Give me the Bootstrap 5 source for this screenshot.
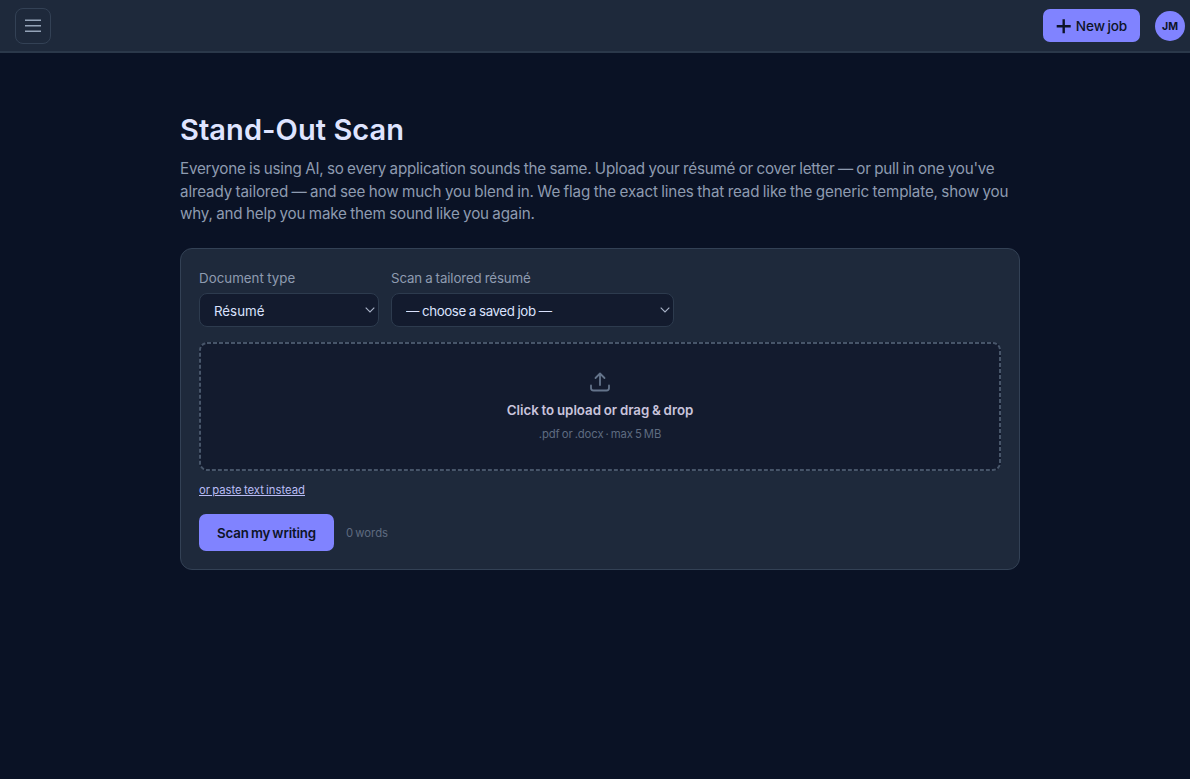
<!DOCTYPE html>
<html lang="en">
<head>
<meta charset="utf-8">
<meta name="viewport" content="width=device-width, initial-scale=1">
<title>Stand-Out Scan</title>
<link href="https://cdn.jsdelivr.net/npm/bootstrap@5.3.0/dist/css/bootstrap.min.css" rel="stylesheet">
<style>
  body { background: #0a1225; color: #dae2fd; font-family: Inter, "Open Sans", sans-serif; overflow: hidden; }
  .topbar { height: 53px; background: #1e293b; border-bottom: 2px solid #2b384a; padding: 0 5px 0 15px; }
  .menu-btn { width: 36px; height: 36px; border: 1px solid #334155; border-radius: 8px; color: #94a3b8; }
  .btn-violet { --bs-btn-bg: #8083ff; --bs-btn-color: #0d1328; --bs-btn-hover-bg: #9093ff; --bs-btn-hover-color: #0d1328; border: 0; border-radius: 7px; white-space: nowrap; }
  .new-job { width: 97px; height: 33px; font-size: 13.6px; font-weight: 500; letter-spacing: -.1px; word-spacing: -1px; }
  .new-job span { position: relative; top: 1px; }
  .avatar { width: 30px; height: 30px; margin-left: 15px; background: #8083ff; color: #0d1328; font-size: 10.5px; font-weight: 700; padding-top: 2px; }
  .page { width: 840px; margin: 59px 0 0 180px; }
  h1 { font-size: 29px; font-weight: 600; line-height: 36px; letter-spacing: .06px; color: #dfe4ff; }
  .intro { margin-top: 10px; font-size: 15.2px; line-height: 22.5px; color: #8e9bb0; height: 68px; word-spacing: -.6px; }
  .intro span { display: block; white-space: nowrap; }
  .l1 { letter-spacing: -.215px; }
  .l2 { letter-spacing: -.15px; }
  .l3 { letter-spacing: -.18px; }
  .panel { height: 322px; margin-top: 22px; padding: 19px 18px 18px; background: #1e293b; border: 1px solid #334155; border-radius: 12px; }
  .form-label { font-size: 13.3px; line-height: 20px; color: #8e9bb0; margin-bottom: 5px; word-spacing: -.5px; letter-spacing: -.13px; }
  .form-label.type-label { letter-spacing: .03px; }
  .form-select { height: 34px; padding: 3px 24px 0 14px; font-size: 13.3px; color: #dae2fd; border: 1px solid #2d3b4e; border-radius: 8px; background-color: #131b2e;
    background-image: url("data:image/svg+xml,%3csvg xmlns='http://www.w3.org/2000/svg' viewBox='0 0 10 6'%3e%3cpath fill='none' stroke='%23a9b3c8' stroke-width='1.1' d='M.7.7 5 5 9.3.7'/%3e%3c/svg%3e"); background-size: 10px 6px; background-position: right 3px top 13px; }
  .doc-type { width: 180px; }
  .saved-job { width: 283px; word-spacing: -.2px; letter-spacing: -.41px; }
  .dropzone { position: relative; height: 129px; margin-top: 15px; padding-top: 30px; border-radius: 8px; background: #131b2e; }
  .dash { position: absolute; inset: 0; }
  .drop-title { font-size: 13.3px; font-weight: 600; line-height: 20px; color: #c9c4dc; margin-top: 8px; word-spacing: -.6px; }
  .hint { font-size: 11.3px; line-height: 16px; color: #5e6b80; word-spacing: -1px; }
  .formats { margin-top: 6px; letter-spacing: -.1px; }
  .paste { display: block; width: max-content; margin-top: 11px; font-size: 11.3px; line-height: 16px; color: #b9bcf5; text-underline-offset: 1px; word-spacing: -1px; }
  .scan-btn { width: 135px; height: 37px; font-size: 13.3px; font-weight: 600; padding: 2px 0 0; word-spacing: -1px; letter-spacing: -.15px; }
</style>
</head>
<body>
<nav class="topbar d-flex align-items-center">
  <button class="menu-btn btn p-0 d-flex align-items-center justify-content-center" aria-label="Menu">
    <svg width="18" height="16" viewBox="0 0 18 16" fill="none" stroke="currentColor" stroke-width="1.5"><path d="M1 2.200h16M1 7.800h16M1 13.300h16"/></svg>
  </button>
  <button class="btn btn-violet new-job p-0 ms-auto d-flex align-items-center justify-content-center">
    <svg class="me-1" width="16" height="16" viewBox="0 0 16 16" fill="none" stroke="currentColor" stroke-width="2.400"><path d="M7.700 1.300v14M.7 8.300h14"/></svg><span>New job</span>
  </button>
  <div class="avatar rounded-circle d-flex align-items-center justify-content-center"><span>JM</span></div>
</nav>
<main class="page">
  <h1 class="mb-0">Stand-Out Scan</h1>
  <p class="intro mb-0"><span class="l1">Everyone is using AI, so every application sounds the same. Upload your résumé or cover letter — or pull in one you've</span>
  <span class="l2">already tailored — and see how much you blend in. We flag the exact lines that read like the generic template, show you</span>
  <span class="l3">why, and help you make them sound like you again.</span></p>
  <section class="panel">
    <div class="d-flex" style="gap:12px">
      <div><label class="form-label type-label d-block" for="doc">Document type</label>
        <select id="doc" class="form-select doc-type"><option>Résumé</option></select></div>
      <div><label class="form-label d-block" for="job">Scan a tailored résumé</label>
        <select id="job" class="form-select saved-job"><option>— choose a saved job —</option></select></div>
    </div>
    <div class="dropzone d-flex flex-column align-items-center">
      <svg class="dash" width="802" height="129" fill="none" stroke="#475569" stroke-width="2" stroke-dasharray="4 2"><rect x="1" y="1" width="800" height="127" rx="7"/></svg>
      <svg width="20" height="20" viewBox="0 0 20 20" fill="none" stroke="#64748b" stroke-width="1.800" stroke-linecap="round" stroke-linejoin="round"><path d="M10 13V2M5.500 6 10 1.500 14.500 6M1 13.500V16q0 2.500 2.500 2.500h13q2.500 0 2.500-2.500v-2.500"/></svg>
      <div class="drop-title">Click to upload or drag &amp; drop</div>
      <div class="hint formats">.pdf or .docx · max 5 MB</div>
    </div>
    <a class="paste" href="#">or paste text instead</a>
    <div class="d-flex align-items-center mt-3" style="gap:12px">
      <button class="btn btn-violet scan-btn">Scan my writing</button><span class="hint">0 words</span>
    </div>
  </section>
</main>
<script src="https://cdn.jsdelivr.net/npm/bootstrap@5.3.0/dist/js/bootstrap.bundle.min.js"></script>
</body>
</html>
